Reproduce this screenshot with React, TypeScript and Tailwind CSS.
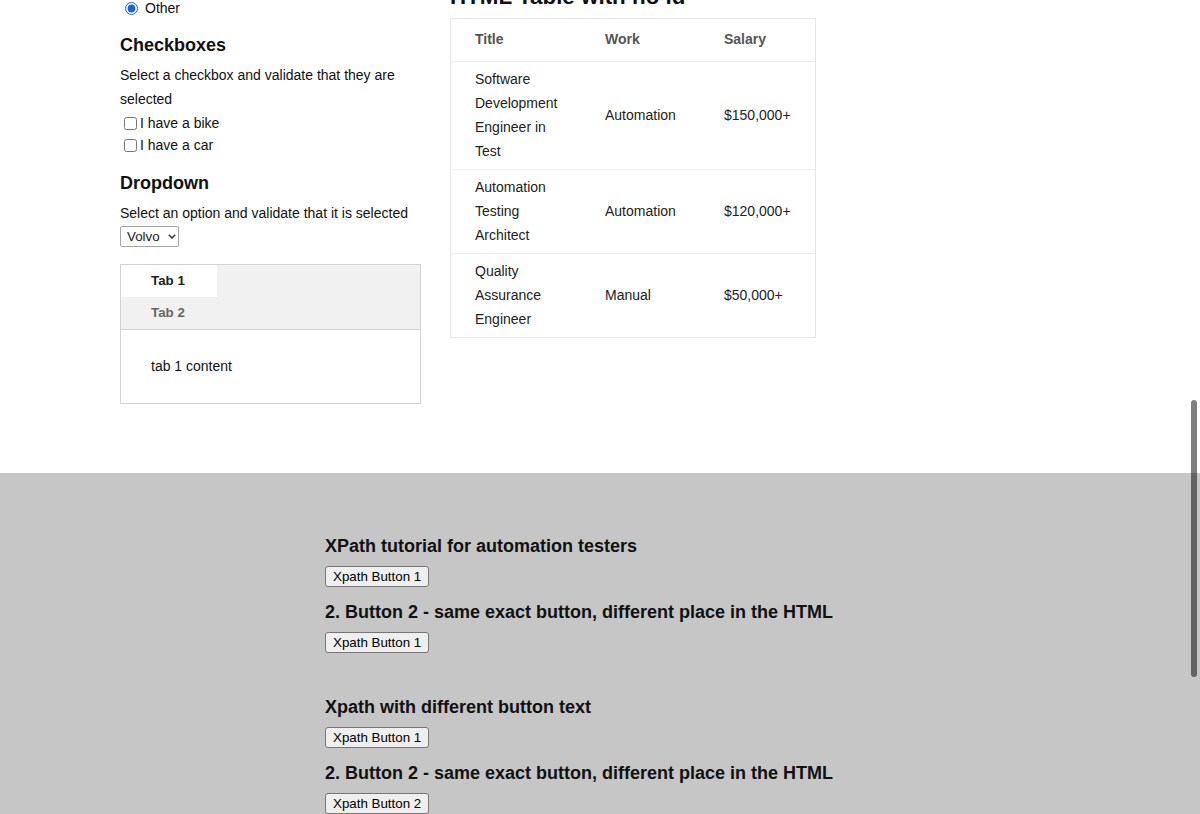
import React from "react";

const rows = [
  { title: "Software Development Engineer in Test", work: "Automation", salary: "$150,000+" },
  { title: "Automation Testing Architect", work: "Automation", salary: "$120,000+" },
  { title: "Quality Assurance Engineer", work: "Manual", salary: "$50,000+" },
];

function XButton({ label, className }: { label: string; className?: string }) {
  return (
    <button
      className={
        "block h-[21px] px-[7px] bg-[#efefef] border border-[#767676] rounded-[3px] text-[13.33px] leading-[15px] text-black " +
        (className ?? "")
      }
    >
      {label}
    </button>
  );
}

export default function App() {
  return (
    <div className="relative w-full h-[814px] overflow-hidden bg-white font-['Liberation_Sans',Arial,sans-serif] text-[#111] flex flex-col">
      {/* Top section */}
      <div className="h-[473px] shrink-0 flex pl-[120px]">
        {/* Left column */}
        <div className="w-[301px] flex flex-col items-start">
          <label className="flex items-center h-[17px] text-[14px]">
            <input
              type="radio"
              name="gender"
              defaultChecked
              className="w-[13px] h-[13px] ml-[5px] accent-[#1a66d9]"
            />
            <span className="ml-[7px]">Other</span>
          </label>

          <h3 className="mt-[17px] text-[18px] font-bold leading-[22px]">Checkboxes</h3>
          <p className="mt-[7px] text-[14px] leading-[24px]">
            Select a checkbox and validate that they are selected
          </p>
          <label className="mt-[1px] flex items-center h-[22px] text-[14px]">
            <input type="checkbox" className="w-[13px] h-[13px] ml-[4px]" />
            <span className="ml-[3px]">I have a bike</span>
          </label>
          <label className="flex items-center h-[22px] text-[14px]">
            <input type="checkbox" className="w-[13px] h-[13px] ml-[4px]" />
            <span className="ml-[3px]">I have a car</span>
          </label>

          <h3 className="mt-[16px] text-[18px] font-bold leading-[22px]">Dropdown</h3>
          <p className="mt-[7px] text-[14px] leading-[24px]">
            Select an option and validate that it is selected
          </p>
          <button
            role="combobox"
            className="mt-[1px] w-[59px] h-[21px] border border-[#a6a6a6] rounded-[2px] bg-white flex items-center justify-between pl-[6px] pr-[2px] text-[13.33px] leading-[15px] text-[#222]"
          >
            <span>Volvo</span>
            <svg width="8" height="5" viewBox="0 0 8 5">
              <path d="M0.8 0.8l3.2 3.2 3.2-3.2" fill="none" stroke="#333" strokeWidth="1.5" />
            </svg>
          </button>

          <div className="mt-[17px] w-[301px] border border-[#d3d3d3]">
            <div className="bg-[#f1f1f1] border-b border-[#d3d3d3] flex flex-col">
              <button className="w-[96px] h-[32px] bg-white text-left pl-[30px] font-bold text-[13.33px] text-[#222]">
                Tab 1
              </button>
              <button className="w-[96px] h-[32px] text-left pl-[30px] font-bold text-[13.33px] text-[#666]">
                Tab 2
              </button>
            </div>
            <div className="py-[28px] px-[30px] text-[14px] leading-[17px]">tab 1 content</div>
          </div>
        </div>

        {/* Right column */}
        <div className="ml-[29px] flex flex-col items-start">
          <h2 className="-mt-[16px] mb-[8px] text-[22.4px] font-bold leading-[26px]">
            HTML Table with no id
          </h2>
          <table className="w-[366px] table-fixed border-separate border-spacing-0 border border-[#e6e6e6] text-[14px]">
            <colgroup>
              <col className="w-[130px]" />
              <col className="w-[119px]" />
              <col className="w-[115px]" />
            </colgroup>
            <thead>
              <tr>
                {["Title", "Work", "Salary"].map((h) => (
                  <th
                    key={h}
                    className="text-left font-bold text-[#555] pl-[24px] pr-[10px] pt-[8px] pb-[10px] leading-[24px] border-b border-[#eeeeee]"
                  >
                    {h}
                  </th>
                ))}
              </tr>
            </thead>
            <tbody>
              {rows.map((r, i) => {
                const b = i < rows.length - 1 ? " border-b border-[#eeeeee]" : "";
                const cls = "align-middle text-[#222] pl-[24px] pr-[10px] pt-[5px] pb-[6px] leading-[24px]" + b;
                return (
                  <tr key={r.title}>
                    <td className={cls}>{r.title}</td>
                    <td className={cls}>{r.work}</td>
                    <td className={cls}>{r.salary}</td>
                  </tr>
                );
              })}
            </tbody>
          </table>
        </div>
      </div>

      {/* Gray section */}
      <div className="flex-1 bg-[#c6c6c6] pl-[325px] pt-[62px] flex flex-col items-start">
        <h3 className="text-[18px] font-bold leading-[22px]">XPath tutorial for automation testers</h3>
        <XButton label="Xpath Button 1" className="mt-[9px]" />
        <h3 className="mt-[14px] text-[18px] font-bold leading-[22px]">
          2. Button 2 - same exact button, different place in the HTML
        </h3>
        <XButton label="Xpath Button 1" className="mt-[9px]" />

        <h3 className="mt-[43px] text-[18px] font-bold leading-[22px]">Xpath with different button text</h3>
        <XButton label="Xpath Button 1" className="mt-[9px]" />
        <h3 className="mt-[14px] text-[18px] font-bold leading-[22px]">
          2. Button 2 - same exact button, different place in the HTML
        </h3>
        <XButton label="Xpath Button 2" className="mt-[9px]" />
      </div>

      {/* Overlay scrollbar thumb */}
      <div className="absolute right-[3px] top-[400px] w-[6px] h-[277px] rounded-full bg-black/50" />
    </div>
  );
}
